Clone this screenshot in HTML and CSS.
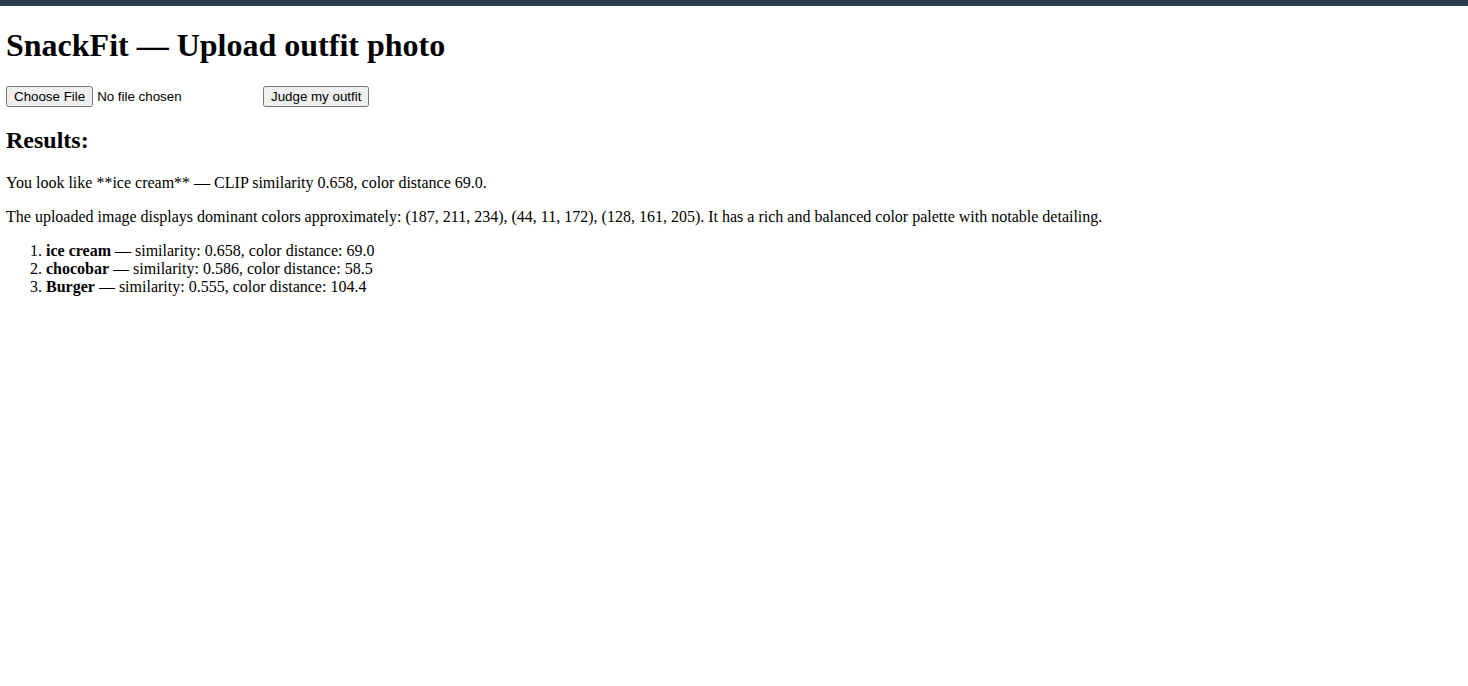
FILE: index.html
```html
<!DOCTYPE html>
<html lang="en">
<head>
<meta charset="utf-8">
<title>SnackFit</title>
<link rel="stylesheet" href="styles.css">
</head>
<body>
<div class="topbar"></div>
<main class="page">
  <h1 class="title">SnackFit — Upload outfit photo</h1>
  <form class="upload">
    <input class="file" type="file" name="photo">
    <button class="judge" type="button">Judge my outfit</button>
  </form>
  <h2 class="results-title">Results:</h2>
  <p class="summary">You look like **ice cream** — CLIP similarity 0.658, color distance 69.0.</p>
  <p class="summary">The uploaded image displays dominant colors approximately: (187, 211, 234), (44, 11, 172), (128, 161, 205). It has a rich and balanced color palette with notable detailing.</p>
  <ol class="matches">
    <li><b>ice cream</b> — similarity: 0.658, color distance: 69.0</li>
    <li><b>chocobar</b> — similarity: 0.586, color distance: 58.5</li>
    <li><b>Burger</b> — similarity: 0.555, color distance: 104.4</li>
  </ol>
</main>
</body>
</html>
```

FILE: styles.css
```css
html, body {
  margin: 0;
  padding: 0;
  background: #ffffff;
}
body {
  font-family: "Liberation Serif", "Times New Roman", serif;
  font-size: 16px;
  color: #000;
}
.topbar {
  height: 6px;
  background: #2c3e4b;
}
.page {
  padding: 0 6px;
}
.title {
  font-size: 32px;
  font-weight: bold;
  margin: 21.44px 0;
}
.upload {
  margin: 0;
}
.file, .judge {
  font-family: "Liberation Sans", Arial, sans-serif;
  font-size: 13.333px;
}
.results-title {
  font-size: 24px;
  margin: 19.92px 0;
}
.summary {
  margin: 16px 0;
}
.matches {
  margin: 16px 0;
  padding-left: 40px;
}
```
